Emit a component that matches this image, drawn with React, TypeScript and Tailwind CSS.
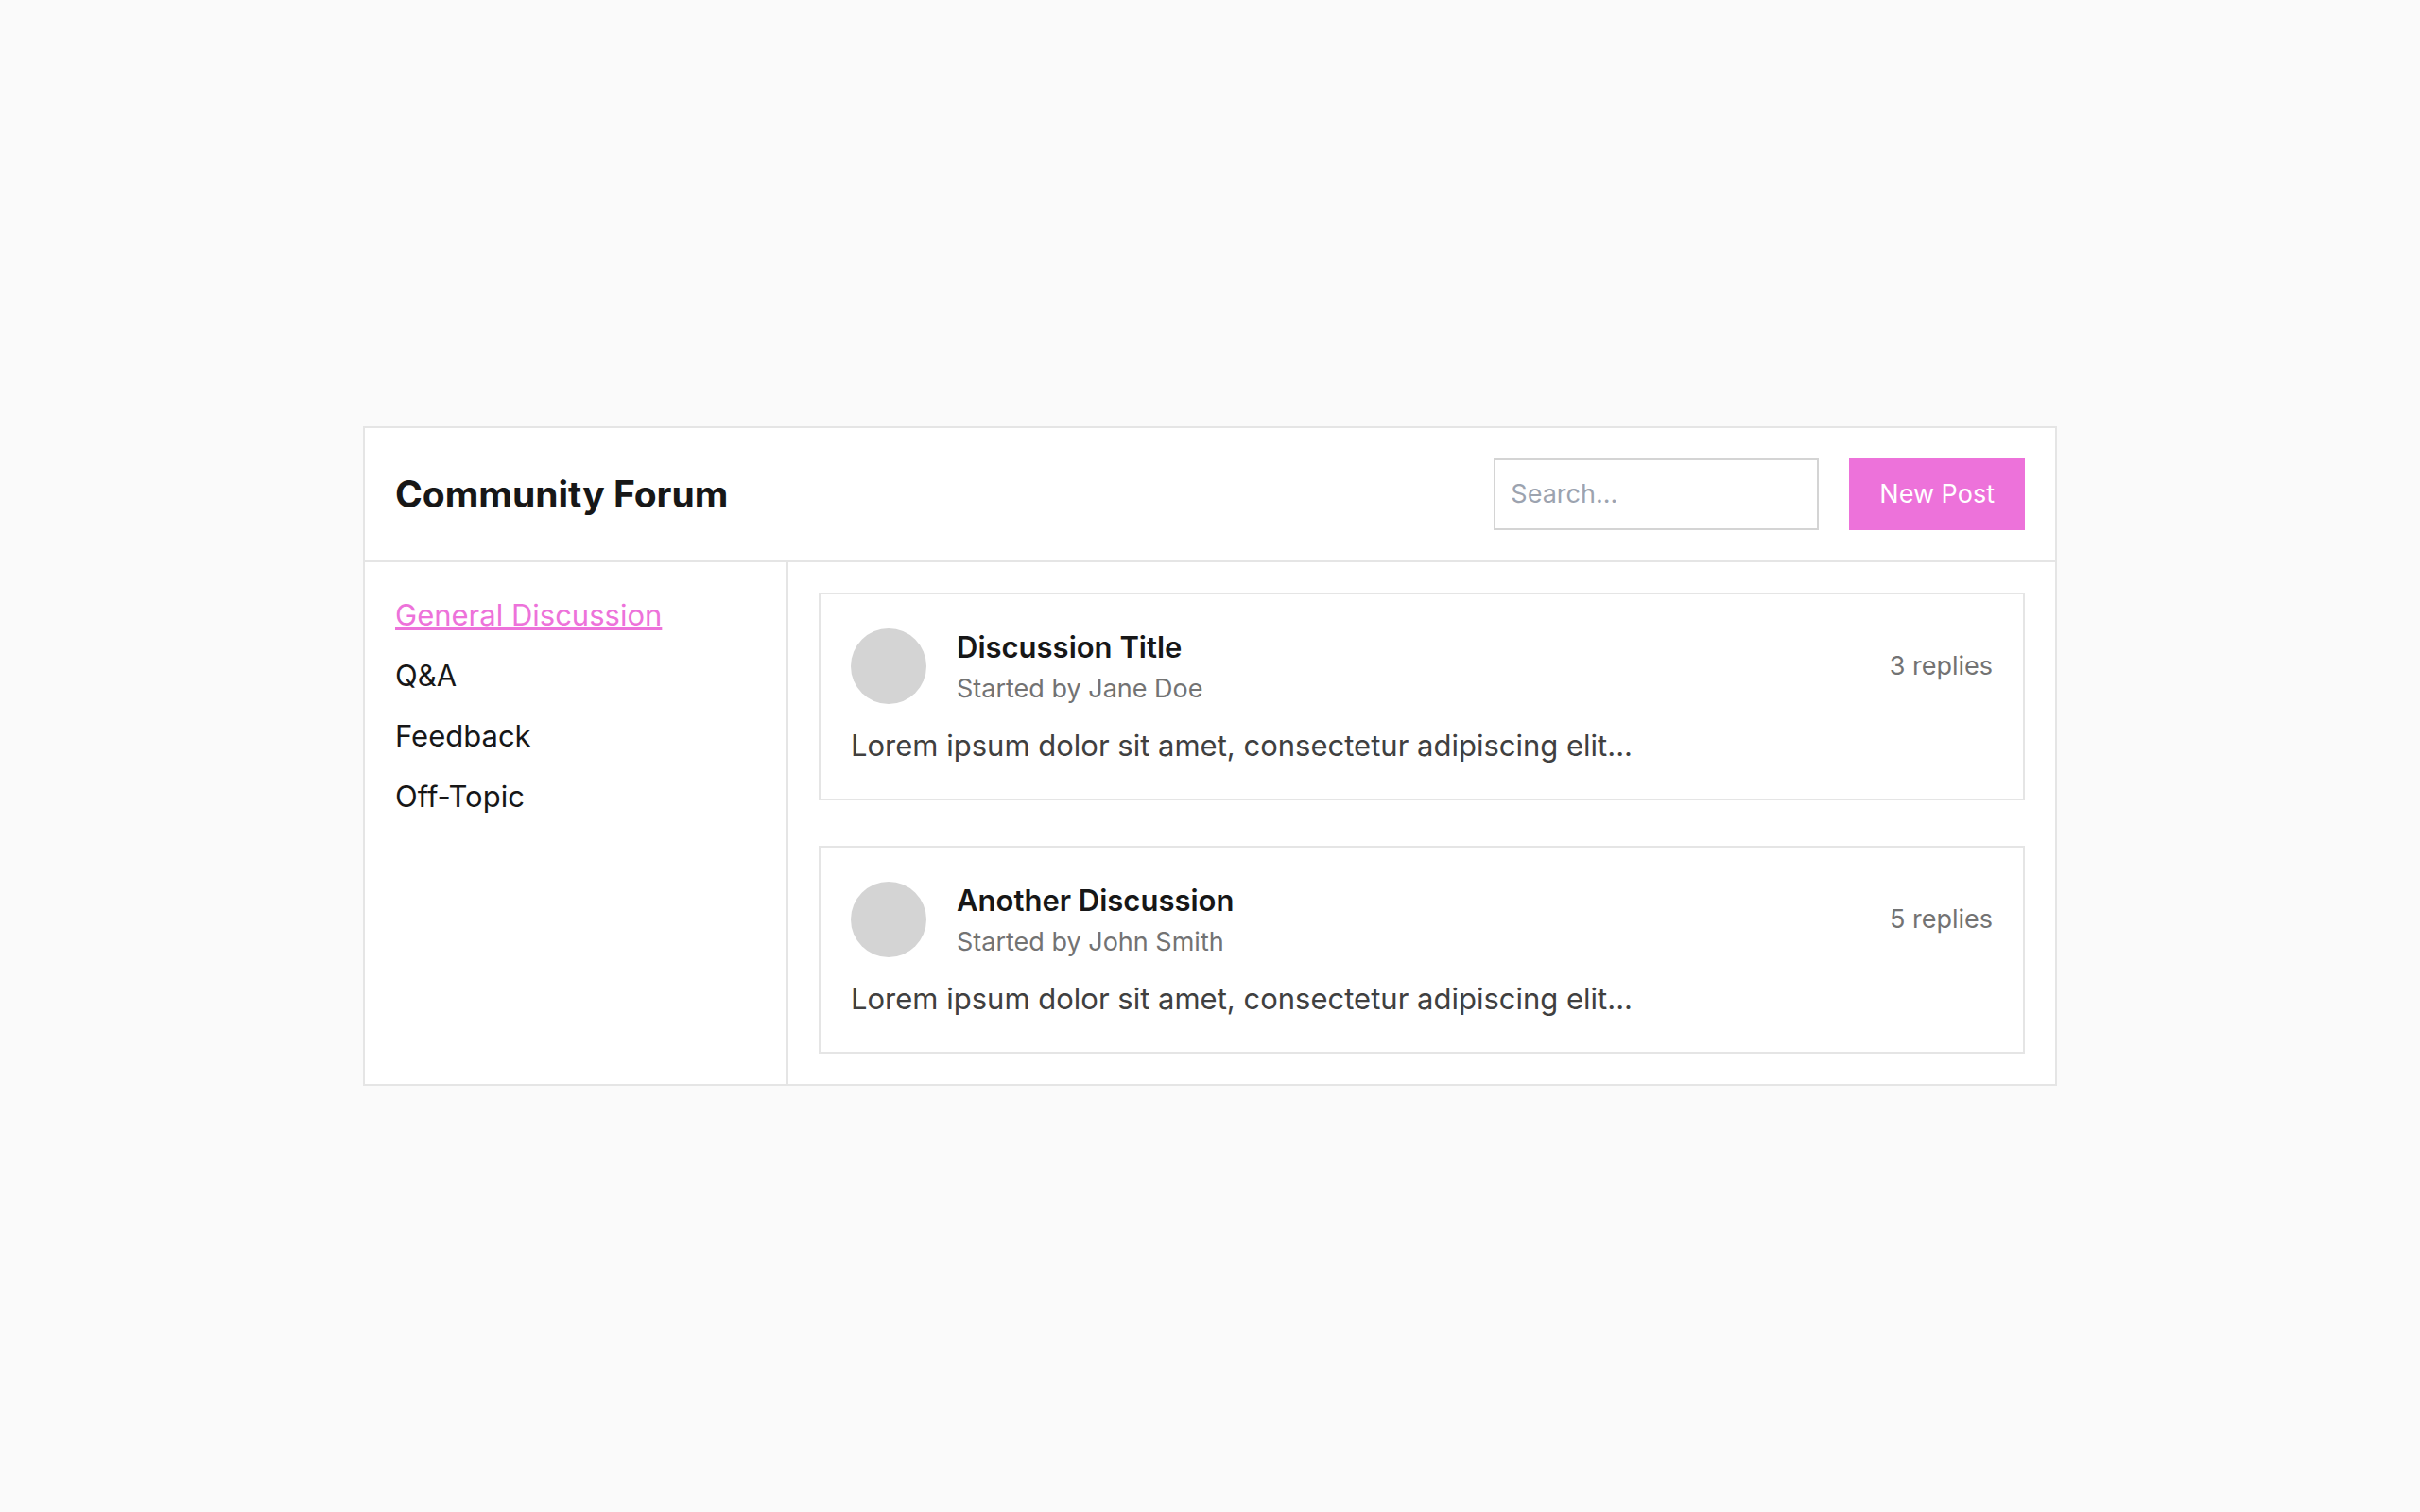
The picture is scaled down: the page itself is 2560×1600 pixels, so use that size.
import React from 'react';

const CATEGORIES = ['General Discussion', 'Q&A', 'Feedback', 'Off-Topic'];

const THREADS = [
    { id: 1, title: 'Discussion Title', author: 'Jane Doe', replies: 3 },
    { id: 2, title: 'Another Discussion', author: 'John Smith', replies: 5 },
];

type Thread = (typeof THREADS)[number];

function Header() {
    return (
        <header className="flex items-center justify-between gap-8 border-b-2 border-[#e5e5e5] p-8">
            <h1 className="text-[39px] leading-14 font-bold">Community Forum</h1>
            <div className="flex gap-8 text-[27px] leading-10">
                <input
                    type="text"
                    aria-label="Search"
                    placeholder="Search..."
                    className="w-86 border-2 border-[#d4d4d4] px-4 py-4 placeholder:text-[#9ca3af]"
                />
                <button type="button" className="bg-[#ed72da] px-8 text-white">
                    New Post
                </button>
            </div>
        </header>
    );
}

function Sidebar() {
    return (
        <nav className="w-112 shrink-0 border-r-2 border-[#e5e5e5] p-8">
            <ul className="space-y-4">
                {CATEGORIES.map((name, i) => (
                    <li key={name}>
                        <a href="#" className={i === 0 ? 'text-[#ed72da] underline' : ''}>
                            {name}
                        </a>
                    </li>
                ))}
            </ul>
        </nav>
    );
}

function ThreadCard({ thread }: { thread: Thread }) {
    return (
        <article className="border-2 border-[#e5e5e5] p-8">
            <div className="mb-4 flex items-center gap-8">
                {/* Avatar placeholder */}
                <div className="size-20 shrink-0 rounded-full bg-[#d4d4d4]" />
                <div className="flex-1">
                    <h2 className="font-semibold">{thread.title}</h2>
                    <p className="text-[27px] leading-10 text-[#737373]">Started by {thread.author}</p>
                </div>
                <span className="text-[27px] leading-10 text-[#737373]">{thread.replies} replies</span>
            </div>
            <p className="text-[#404040]">Lorem ipsum dolor sit amet, consectetur adipiscing elit...</p>
        </article>
    );
}

export default function App() {
    return (
        <div className="flex min-h-screen items-center justify-center bg-[#fafafa] font-['Inter',sans-serif] text-[31px] leading-12 text-[#171717]">
            <div className="w-full max-w-448 border-2 border-[#e5e5e5] bg-white">
                <Header />
                <div className="flex">
                    <Sidebar />
                    <main className="flex-1 space-y-12 p-8">
                        {THREADS.map((thread) => (
                            <ThreadCard key={thread.id} thread={thread} />
                        ))}
                    </main>
                </div>
            </div>
        </div>
    );
}
